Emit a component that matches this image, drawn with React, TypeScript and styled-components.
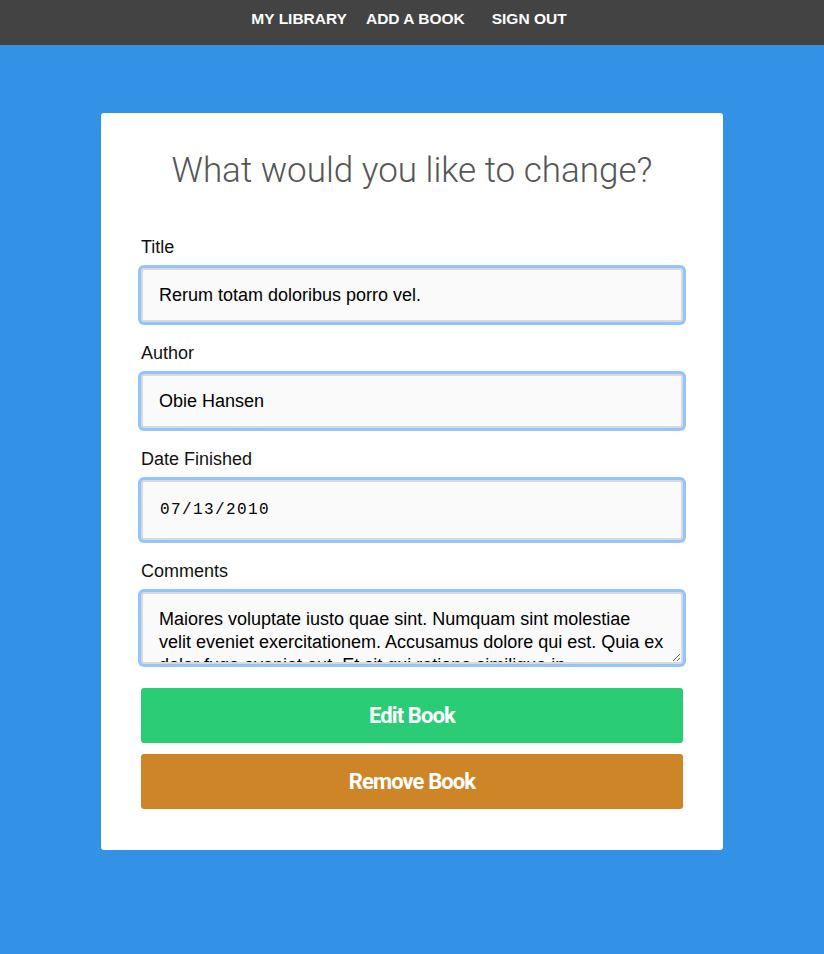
import React from "react";
import styled, { createGlobalStyle } from "styled-components";

const Global = createGlobalStyle`
  html, body { margin: 0; padding: 0; }
  body {
    background: #3391e6;
    font-family: "Liberation Sans", Arial, sans-serif;
    min-height: 954px;
  }
`;

const Page = styled.div`
  min-height: 954px;
  background: #3391e6;
`;

const NavBar = styled.nav`
  height: 45px;
  background: #434343;
  display: flex;
  justify-content: center;
  align-items: center;
  padding-bottom: 7px;
  box-sizing: border-box;
  padding-right: 6px;
`;

const NavLink = styled.a<{ $gap?: number }>`
  color: #ffffff;
  font-family: "Liberation Sans", Arial, sans-serif;
  font-weight: 700;
  font-size: 15.5px;
  text-decoration: none;
  margin-left: ${(p) => p.$gap ?? 0}px;
`;

const Card = styled.main`
  width: 622px;
  box-sizing: border-box;
  margin: 68px auto 0;
  background: #ffffff;
  border-radius: 3px;
  padding: 38px 40px 41px;
`;

const Heading = styled.h1`
  margin: 0 0 46px;
  text-align: center;
  font-family: Roboto, sans-serif;
  font-weight: 300;
  font-size: 35px;
  line-height: 40px;
  color: #555555;
`;

const Form = styled.form`
  display: flex;
  flex-direction: column;
`;

const Field = styled.div`
  display: flex;
  flex-direction: column;
  margin-bottom: 21px;
`;

const Label = styled.label`
  font-size: 18px;
  line-height: 20px;
  color: #111;
  margin-bottom: 11px;
`;

const fieldBase = `
  box-sizing: border-box;
  width: 100%;
  background: #fafafa;
  border: 2px solid #d9d9d9;
  border-radius: 3px;
  box-shadow: 0 0 0 3px #92c4ff;
  outline: none;
  color: #000;
  font-family: "Liberation Sans", Arial, sans-serif;
  font-size: 18px;
  padding: 0 16px;
  margin: 0;
`;

const TextInput = styled.input<{ $h?: number; $mono?: boolean }>`
  ${fieldBase}
  height: ${(p) => p.$h ?? 54}px;
  ${(p) =>
    p.$mono
      ? `font-family: "Liberation Mono", monospace; font-size: 16px; letter-spacing: 1.4px; padding-left: 17px;`
      : ""}
`;

const TextArea = styled.textarea`
  ${fieldBase}
  height: 72px;
  padding: 14px 14px 0 16px;
  line-height: 23px;
  resize: vertical;
  overflow: hidden;
  display: block;
`;

const TextAreaField = styled(Field)`
  margin-bottom: 24px;
`;

const Button = styled.button<{ $color: string; $mb?: number }>`
  height: 55px;
  width: 100%;
  border: none;
  border-radius: 3px;
  background: ${(p) => p.$color};
  color: #ffffff;
  font-family: Roboto, sans-serif;
  font-weight: 700;
  font-size: 22px;
  letter-spacing: -0.9px;
  margin-bottom: ${(p) => p.$mb ?? 0}px;
  cursor: pointer;
`;

export default function App() {
  return (
    <Page>
      <Global />
      <NavBar>
        <NavLink href="#">MY LIBRARY</NavLink>
        <NavLink href="#" $gap={19}>ADD A BOOK</NavLink>
        <NavLink href="#" $gap={27}>SIGN OUT</NavLink>
      </NavBar>
      <Card>
        <Heading>What would you like to change?</Heading>
        <Form onSubmit={(e) => e.preventDefault()}>
          <Field>
            <Label>Title</Label>
            <TextInput defaultValue="Rerum totam doloribus porro vel." />
          </Field>
          <Field>
            <Label>Author</Label>
            <TextInput defaultValue="Obie Hansen" />
          </Field>
          <Field>
            <Label>Date Finished</Label>
            <TextInput $h={60} $mono defaultValue="07/13/2010" />
          </Field>
          <TextAreaField>
            <Label>Comments</Label>
            <TextArea defaultValue="Maiores voluptate iusto quae sint. Numquam sint molestiae velit eveniet exercitationem. Accusamus dolore qui est. Quia ex dolor fuga eveniet aut. Et sit qui ratione similique in." />
          </TextAreaField>
          <Button type="submit" $color="#2bcc76" $mb={11}>Edit Book</Button>
          <Button type="button" $color="#cd8528">Remove Book</Button>
        </Form>
      </Card>
    </Page>
  );
}
